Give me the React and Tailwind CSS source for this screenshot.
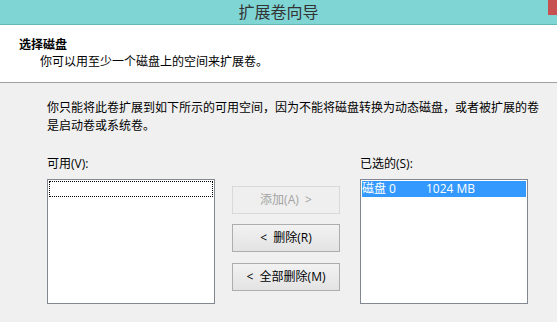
export default function App() {
  const font = { fontFamily: '"Open Sans", "Noto Sans CJK SC", sans-serif' };
  return (
    <div
      className="relative w-[557px] h-[322px] overflow-hidden bg-[#f0f0f0] text-[12px] text-[#000]"
      style={font}
    >
      {/* title bar */}
      <div className="h-[25px] bg-[#7fd4d4] border-b border-[#62b9b9] flex items-center justify-center">
        <span className="text-[16px] leading-[20px] text-[#333333] -mt-[1px]">扩展卷向导</span>
      </div>
      <div className="absolute right-0 top-0 w-[9px] h-[15px] bg-[#c75050]" />

      {/* header */}
      <div className="h-[58px] bg-white border-b border-[#a0a0a0] pt-[11px] pl-[19px]">
        <div className="font-bold leading-[17px]">选择磁盘</div>
        <div className="pl-[21px] leading-[17px]">你可以用至少一个磁盘上的空间来扩展卷。</div>
      </div>

      {/* body */}
      <div className="pl-[47px] pt-[16px]">
        <p className="w-[498px] leading-[18px]">
          你只能将此卷扩展到如下所示的可用空间，因为不能将磁盘转换为动态磁盘，或者被扩展的卷是启动卷或系统卷。
        </p>

        <div className="mt-[20px] flex">
          <div className="w-[168px]">
            <div className="leading-[18px] h-[24px]">可用(V):</div>
            <div className="h-[125px] border border-[#828790] bg-white p-[1px]">
              <div className="h-[16px] border border-dotted border-black" />
            </div>
          </div>

          <div className="ml-[17px] w-[108px] pt-[31px] flex flex-col">
            <div className="h-[28px] border border-[#d9d9d9] bg-[#efefef] flex items-center justify-center text-[#a3a3a3] leading-[16px]">
              添加(A)&nbsp;&nbsp;&gt;
            </div>
            <div className="mt-[10px] h-[28px] border border-[#adadad] bg-gradient-to-b from-[#f2f2f2] to-[#e3e3e3] flex items-center justify-center leading-[16px]">
              &lt;&nbsp;&nbsp;删除(R)
            </div>
            <div className="mt-[11px] h-[28px] border border-[#adadad] bg-gradient-to-b from-[#f2f2f2] to-[#e3e3e3] flex items-center justify-center leading-[16px]">
              &lt;&nbsp;&nbsp;全部删除(M)
            </div>
          </div>

          <div className="ml-[20px] w-[168px]">
            <div className="leading-[18px] h-[24px]">已选的(S):</div>
            <div className="h-[125px] border border-[#828790] bg-white p-[1px]">
              <div className="h-[16px] bg-[#3399ff] text-white flex items-center leading-[16px]">
                <span className="w-[64px]">磁盘 0</span>
                <span>1024 MB</span>
              </div>
            </div>
          </div>
        </div>
      </div>
    </div>
  );
}
